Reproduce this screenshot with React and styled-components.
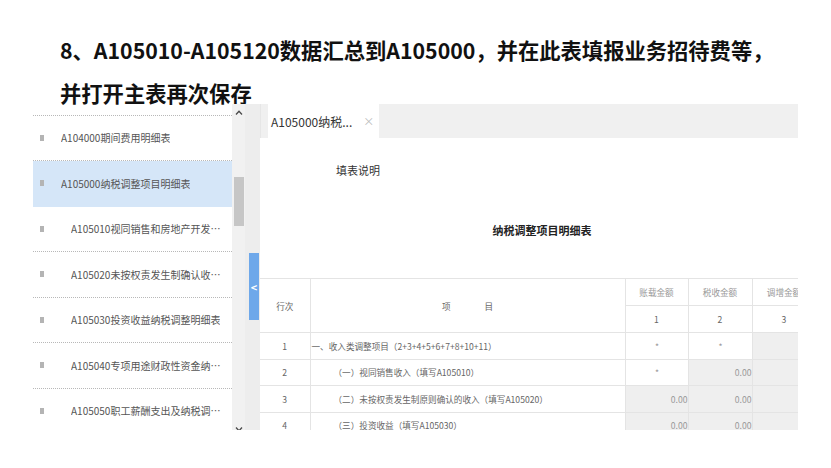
import React, { useLayoutEffect, useRef } from "react";
import styled, { createGlobalStyle } from "styled-components";

const GlobalStyle = createGlobalStyle`
  body {
    margin: 0;
    background: #fff;
    font-family: "Noto Sans CJK SC", "Noto Sans", sans-serif;
  }
`;

const Page = styled.div`
  width: 831px;
  height: 468px;
  overflow: hidden;
  background: #fff;
`;

const Heading = styled.h1`
  display: flex;
  flex-direction: column;
  gap: 21px;
  margin: 0;
  height: 104px;
  padding: 39px 0 0 60px;
  box-sizing: border-box;
  font-size: 21.3px;
  line-height: 22px;
  font-weight: 700;
  color: #111;
  white-space: nowrap;
`;

const Frame = styled.div`
  display: flex;
  width: 765px;
  height: 326px;
  margin-left: 33px;
  overflow: hidden;
`;

const Sidebar = styled.div`
  display: flex;
  width: 212px;
  flex-shrink: 0;
`;

const List = styled.ul`
  width: 199px;
  height: 100%;
  margin: 0;
  padding: 0;
  list-style: none;
  overflow: hidden;
`;

const Item = styled.li`
  display: flex;
  align-items: center;
  height: 45.5px;
  box-sizing: border-box;
  padding: 0 7px;
  border-bottom: 1px dotted ${(p) => (p.$active ? "#d5e6f8" : "#b8b8b8")};
  background: ${(p) => (p.$active ? "#d5e6f8" : "transparent")};
`;

const Bullet = styled.span`
  width: 4px;
  height: 6px;
  flex-shrink: 0;
  background: #b4b4b4;
`;

const Label = styled.span`
  margin-left: ${(p) => (p.$level === 2 ? "27px" : "17px")};
  font-size: 10px;
  color: #555;
  white-space: nowrap;
  overflow: hidden;
  text-overflow: ellipsis;
`;

const Scrollbar = styled.div`
  display: flex;
  flex-direction: column;
  width: 13px;
  height: 334px;
  background: #f1f1f1;
`;

const Arrow = styled.div`
  display: flex;
  align-items: center;
  justify-content: center;
  height: 17px;
`;

const Track = styled.div`
  flex: 1;
  padding: 56px 1px 0 2px;
`;

const Thumb = styled.div`
  height: 49px;
  background: #c6c6c6;
`;

const Gutter = styled.div`
  width: 15px;
  flex-shrink: 0;
  padding: 149px 1px 0 4px;
  box-sizing: border-box;
  background: #ededed;
`;

const Toggle = styled.div`
  display: flex;
  align-items: center;
  justify-content: center;
  height: 67px;
  background: #6ea8ea;
  color: #fff;
  font-size: 11px;
  font-weight: 700;
`;

const Main = styled.div`
  display: flex;
  flex-direction: column;
  width: 538px;
  flex-shrink: 0;
  overflow: hidden;
  background: #fff;
`;

const TabBar = styled.div`
  display: flex;
  height: 34px;
  padding-left: 7px;
  background: #f0f0f0;
  border-left: 1px solid #e6e6e6;
  flex-shrink: 0;
`;

const Tab = styled.div`
  display: flex;
  align-items: center;
  width: 111px;
  padding-left: 3px;
  box-sizing: border-box;
  background: #fff;
  font-size: 12px;
  color: #333;
`;

const Close = styled.span`
  margin-left: 11px;
  font-size: 11px;
  color: #bbb;
`;

const Body = styled.div`
  display: flex;
  flex-direction: column;
`;

const Hint = styled.div`
  margin-top: 24px;
  padding-left: 76px;
  font-size: 11px;
  line-height: 16px;
  color: #333;
`;

const FormTitle = styled.div`
  margin-top: 44px;
  padding-left: 26px;
  text-align: center;
  font-size: 11px;
  line-height: 16px;
  font-weight: 700;
  color: #222;
`;

const Table = styled.table`
  margin-top: 40px;
  width: 556px;
  table-layout: fixed;
  border-collapse: collapse;
  font-size: 8.6px;
  color: #666;
`;

const Row = styled.tr`
  height: ${(p) => (p.$head ? "27px" : "26.5px")};
`;

const Cell = styled.td`
  padding: 0 ${(p) => (p.$num ? "0" : "1px")} 0 ${(p) => p.$indent || 1}px;
  border: 1px solid #e4e4e4;
  border-left: ${(p) => (p.$first ? "none" : "1px solid #e4e4e4")};
  background: ${(p) => (p.$gray ? "#efefef" : "#fff")};
  text-align: ${(p) => p.$align || "left"};
  color: ${(p) => (p.$muted ? "#999" : "#666")};
  white-space: nowrap;
  overflow: hidden;
`;

const Pair = styled.span`
  display: inline-flex;
  gap: 34px;
`;

const ChevronUp = () => (
  <svg width="8" height="5" viewBox="0 0 8 5">
    <path d="M1 4.5 L4 1.2 L7 4.5" fill="none" stroke="#4a4a4a" strokeWidth="1.3" />
  </svg>
);

const ChevronDown = () => (
  <svg width="8" height="5" viewBox="0 0 8 5">
    <path d="M1 0.5 L4 3.8 L7 0.5" fill="none" stroke="#4a4a4a" strokeWidth="1.3" />
  </svg>
);

const items = [
  { label: "A103000事业单位、民间非营利组织收入、支出明细表", level: 1 },
  { label: "A104000期间费用明细表", level: 1 },
  { label: "A105000纳税调整项目明细表", level: 1, active: true },
  { label: "A105010视同销售和房地产开发企业特定业务纳税调整明细表", level: 2 },
  { label: "A105020未按权责发生制确认收入纳税调整明细表", level: 2 },
  { label: "A105030投资收益纳税调整明细表", level: 2 },
  { label: "A105040专项用途财政性资金纳税调整明细表", level: 2 },
  { label: "A105050职工薪酬支出及纳税调整明细表", level: 2 },
  { label: "A105060广告费和业务宣传费跨年度纳税调整明细表", level: 2 },
];

const rows = [
  { no: "1", name: "一、收入类调整项目（2+3+4+5+6+7+8+10+11）", indent: 1, cells: [{ v: "*" }, { v: "*" }, { gray: true }] },
  { no: "2", name: "（一）视同销售收入（填写A105010）", indent: 23, cells: [{ v: "*" }, { v: "0.00", gray: true }, { gray: true }] },
  { no: "3", name: "（二）未按权责发生制原则确认的收入（填写A105020）", indent: 23, cells: [{ v: "0.00", gray: true }, { v: "0.00", gray: true }, { gray: true }] },
  { no: "4", name: "（三）投资收益（填写A105030）", indent: 23, cells: [{ v: "0.00", gray: true }, { v: "0.00", gray: true }, { gray: true }] },
];

export default function App() {
  const listRef = useRef(null);

  useLayoutEffect(() => {
    if (listRef.current) listRef.current.scrollTop = 34;
  }, []);

  return (
    <Page>
      <GlobalStyle />
      <Heading>
        <span>8、A105010-A105120数据汇总到A105000，并在此表填报业务招待费等，</span>
        <span>并打开主表再次保存</span>
      </Heading>
      <Frame>
        <Sidebar>
          <List ref={listRef}>
            {items.map((it) => (
              <Item key={it.label} $active={it.active}>
                <Bullet />
                <Label $level={it.level}>{it.label}</Label>
              </Item>
            ))}
          </List>
          <Scrollbar>
            <Arrow>
              <ChevronUp />
            </Arrow>
            <Track>
              <Thumb />
            </Track>
            <Arrow>
              <ChevronDown />
            </Arrow>
          </Scrollbar>
        </Sidebar>
        <Gutter>
          <Toggle>&lt;</Toggle>
        </Gutter>
        <Main>
          <TabBar>
            <Tab>
              A105000纳税...
              <Close>×</Close>
            </Tab>
          </TabBar>
          <Body>
            <Hint>填表说明</Hint>
            <FormTitle>纳税调整项目明细表</FormTitle>
            <Table>
              <colgroup>
                <col style={{ width: 50 }} />
                <col style={{ width: 315 }} />
                <col style={{ width: 63 }} />
                <col style={{ width: 64 }} />
                <col style={{ width: 64 }} />
              </colgroup>
              <tbody>
                <Row $head>
                  <Cell $first rowSpan={2} $align="center">行次</Cell>
                  <Cell rowSpan={2} $align="center">
                    <Pair>
                      <span>项</span>
                      <span>目</span>
                    </Pair>
                  </Cell>
                  <Cell $align="center" $muted>账载金额</Cell>
                  <Cell $align="center" $muted>税收金额</Cell>
                  <Cell $align="center" $muted>调增金额</Cell>
                </Row>
                <Row $head>
                  <Cell $align="center">1</Cell>
                  <Cell $align="center">2</Cell>
                  <Cell $align="center">3</Cell>
                </Row>
                {rows.map((r) => (
                  <Row key={r.no}>
                    <Cell $first $align="center">{r.no}</Cell>
                    <Cell $indent={r.indent}>{r.name}</Cell>
                    {r.cells.map((c, i) => (
                      <Cell
                        key={i}
                        $gray={c.gray}
                        $muted
                        $num
                        $align={c.v === "*" ? "center" : "right"}
                      >
                        {c.v}
                      </Cell>
                    ))}
                  </Row>
                ))}
              </tbody>
            </Table>
          </Body>
        </Main>
      </Frame>
    </Page>
  );
}
